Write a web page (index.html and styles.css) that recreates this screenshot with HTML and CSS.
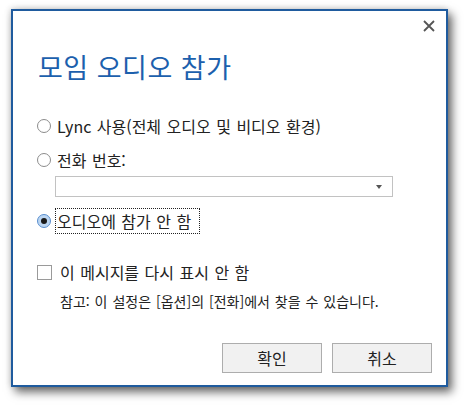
FILE: index.html
```html
<!DOCTYPE html>
<html lang="ko">
<head>
<meta charset="utf-8">
<link rel="stylesheet" href="styles.css">
</head>
<body>
<div class="dialog">
  <div class="titlebar">
    <svg class="close" width="12" height="12" viewBox="0 0 12 12"><path d="M1 1 L11 11 M11 1 L1 11" stroke="#555" stroke-width="1.8" fill="none"/></svg>
  </div>
  <h1 class="title">모임 오디오 참가</h1>
  <div class="options">
    <label class="opt"><span class="radio"></span><span class="lbl">Lync 사용(전체 오디오 및 비디오 환경)</span></label>
    <label class="opt opt2"><span class="radio"></span><span class="lbl">전화 번호:</span></label>
    <div class="select"><span class="arrow"></span></div>
    <label class="opt opt3"><span class="radio checked"></span><span class="lbl focus">오디오에 참가 안 함</span></label>
  </div>
  <label class="chk"><span class="box"></span><span class="lbl">이 메시지를 다시 표시 안 함</span></label>
  <p class="note">참고: 이 설정은 [옵션]의 [전화]에서 찾을 수 있습니다.</p>
  <div class="buttons">
    <button class="btn">확인</button>
    <button class="btn">취소</button>
  </div>
</div>
</body>
</html>
```
FILE: styles.css
```css
* { box-sizing: border-box; }
html, body { margin: 0; padding: 0; background: #fff; }
body {
  width: 464px; height: 405px; overflow: hidden;
  font-family: "Noto Sans CJK KR", "Noto Sans", sans-serif;
  color: #222;
}
.dialog {
  margin: 9px 0 0 11px;
  width: 437px; height: 378px;
  border: 2px solid #1f5b9e;
  background: #fff;
  box-shadow: 4px 5px 9px rgba(0,0,0,0.6), -1px -1px 6px rgba(0,0,0,0.15);
  display: flex; flex-direction: column;
  position: relative;
}
.titlebar { height: 28px; display: flex; justify-content: flex-end; padding: 9px 11px 0 0; }
.close { display: block; }
.title {
  margin: 10px 0 0 25px;
  font-size: 27px; font-weight: normal; line-height: 36px;
  color: #1c60ad;
  letter-spacing: 0.5px;
}
.options { display: flex; flex-direction: column; margin: 30px 0 0 24px; }
.opt { display: flex; align-items: center; height: 22px; font-size: 16px; word-spacing: 1px; }
.opt2 { margin-top: 12px; }
.opt3 { margin-top: 11px; height: 26px; }
.radio {
  width: 14px; height: 14px; border-radius: 50%;
  border: 1px solid #8c8c8c; background: #fff;
  margin-right: 6px; flex: none;
}
.radio.checked {
  background: #bcd6f2; border-color: #5a8fcf; position: relative;
}
.radio.checked::after {
  content: ""; position: absolute; left: 3px; top: 3px;
  width: 6px; height: 6px; border-radius: 50%; background: #1a1a1a;
}
.lbl { line-height: 20px; }
.focus { border: 1px dotted #222; padding: 2px 8px 2px 1px; margin-left: -2px; }
.select {
  margin: 5px 0 0 18px; width: 338px; height: 21px;
  border: 1px solid #c2c2c2; background: #fff;
  display: flex; justify-content: flex-end; align-items: center; padding-right: 10px;
}
.arrow { width: 0; height: 0; border-left: 3.5px solid transparent; border-right: 3.5px solid transparent; border-top: 4px solid #555; }
.chk { display: flex; align-items: center; margin: 28px 0 0 24px; font-size: 16px; word-spacing: 1px; }
.box { width: 15px; height: 15px; border: 1px solid #9a9a9a; background: #fff; margin-right: 8px; flex: none; }
.note { margin: 10px 0 0 47px; font-size: 14px; line-height: 18px; word-spacing: 1px; }
.buttons { display: flex; justify-content: flex-end; gap: 10px; margin-top: auto; padding: 0 14px 12px 0; }
.btn {
  width: 100px; height: 30px;
  border: 1px solid #adadad; background: #f1f1f1;
  font-family: inherit; font-size: 16px; color: #222;
}
```
